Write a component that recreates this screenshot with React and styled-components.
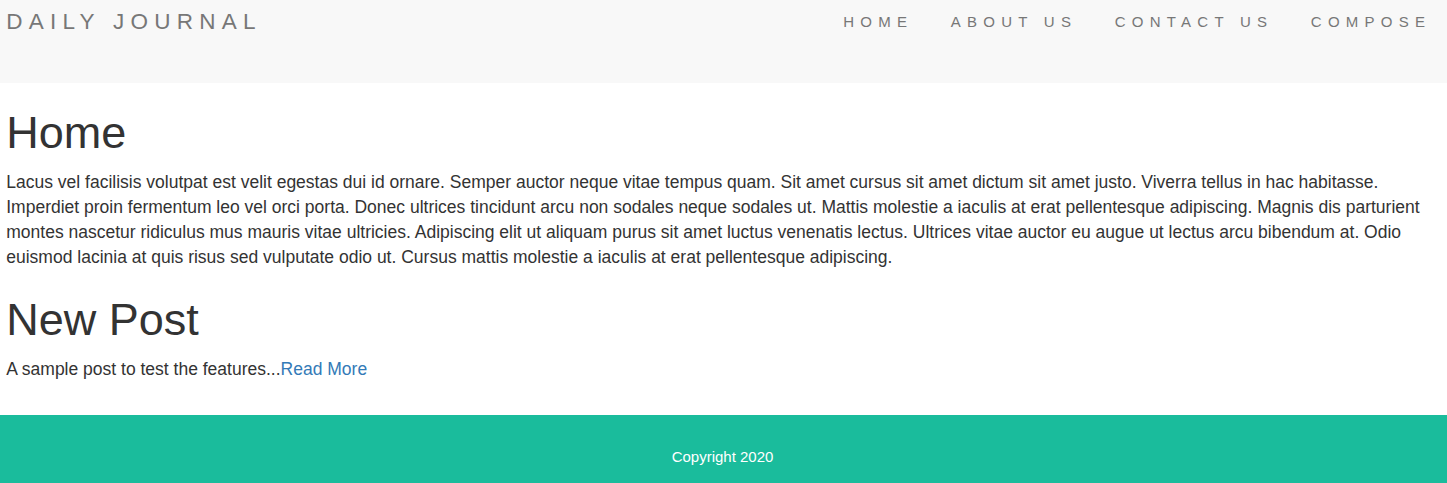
import React from "react";
import styled, { createGlobalStyle } from "styled-components";

const Global = createGlobalStyle`
  html, body { margin: 0; padding: 0; background: #fff; }
  body {
    font-family: "Liberation Sans", Arial, Helvetica, sans-serif;
    font-size: 17.5px;
    line-height: 25px;
    color: #333;
  }
  * { box-sizing: border-box; }
`;

const Navbar = styled.nav`
  display: flex;
  justify-content: space-between;
  align-items: flex-start;
  height: 83px;
  background: #f8f8f8;
  padding: 0 0 0 6.25px;
`;

const Brand = styled.a`
  display: block;
  padding-top: 9px;
  font-size: 22.5px;
  line-height: 25px;
  letter-spacing: 6.25px;
  color: #777;
  text-decoration: none;
  text-transform: uppercase;
`;

const NavList = styled.ul`
  display: flex;
  list-style: none;
  margin: 0 -3px 0 0;
  padding: 0;
`;

const NavLink = styled.a`
  display: block;
  padding: 12.3px 18.75px 0;
  font-size: 15px;
  line-height: 20px;
  letter-spacing: 6.25px;
  color: #777;
  text-decoration: none;
  text-transform: uppercase;
`;

const Main = styled.main`
  padding: 0 6.25px;
  overflow: hidden;
`;

const Title = styled.h1`
  margin: 25px 0 12.5px;
  font-size: 45px;
  line-height: 49.5px;
  font-weight: 500;
  color: #333;
`;

const Text = styled.p`
  margin: 0 0 12.5px;
`;

const Link = styled.a`
  color: #337ab7;
  text-decoration: none;
`;

const Footer = styled.footer`
  margin-top: 20.5px;
  background: #1abc9c;
  padding: 31px 0 16px;
  text-align: center;
  color: #fff;
  font-size: 15px;
  line-height: 21px;
`;

const FooterText = styled.p`
  margin: 0 2px 0 0;
`;

const posts = [
  {
    title: "Home",
    body: (
      <>
        Lacus vel facilisis volutpat est velit egestas dui id ornare. Semper auctor neque vitae tempus quam. Sit amet cursus sit amet dictum sit amet justo. Viverra tellus in hac habitasse. Imperdiet proin fermentum leo vel orci porta. Donec ultrices tincidunt arcu non sodales neque sodales ut. Mattis molestie a iaculis at erat pellentesque adipiscing. Magnis dis parturient montes nascetur ridiculus mus mauris vitae ultricies. Adipiscing elit ut aliquam purus sit amet luctus venenatis lectus. Ultrices vitae auctor eu augue ut lectus arcu bibendum at. Odio euismod lacinia at quis risus sed vulputate odio ut. Cursus mattis molestie a iaculis at erat pellentesque adipiscing.
      </>
    ),
  },
  {
    title: "New Post",
    body: (
      <>
        A sample post to test the features...<Link href="#">Read More</Link>
      </>
    ),
  },
];

export default function App() {
  return (
    <>
      <Global />
      <Navbar>
        <Brand href="#">Daily Journal</Brand>
        <NavList>
          {["Home", "About Us", "Contact Us", "Compose"].map((l) => (
            <li key={l}>
              <NavLink href="#">{l}</NavLink>
            </li>
          ))}
        </NavList>
      </Navbar>
      <Main>
        {posts.map((p) => (
          <section key={p.title}>
            <Title>{p.title}</Title>
            <Text>{p.body}</Text>
          </section>
        ))}
      </Main>
      <Footer>
        <FooterText>Copyright 2020</FooterText>
      </Footer>
    </>
  );
}
